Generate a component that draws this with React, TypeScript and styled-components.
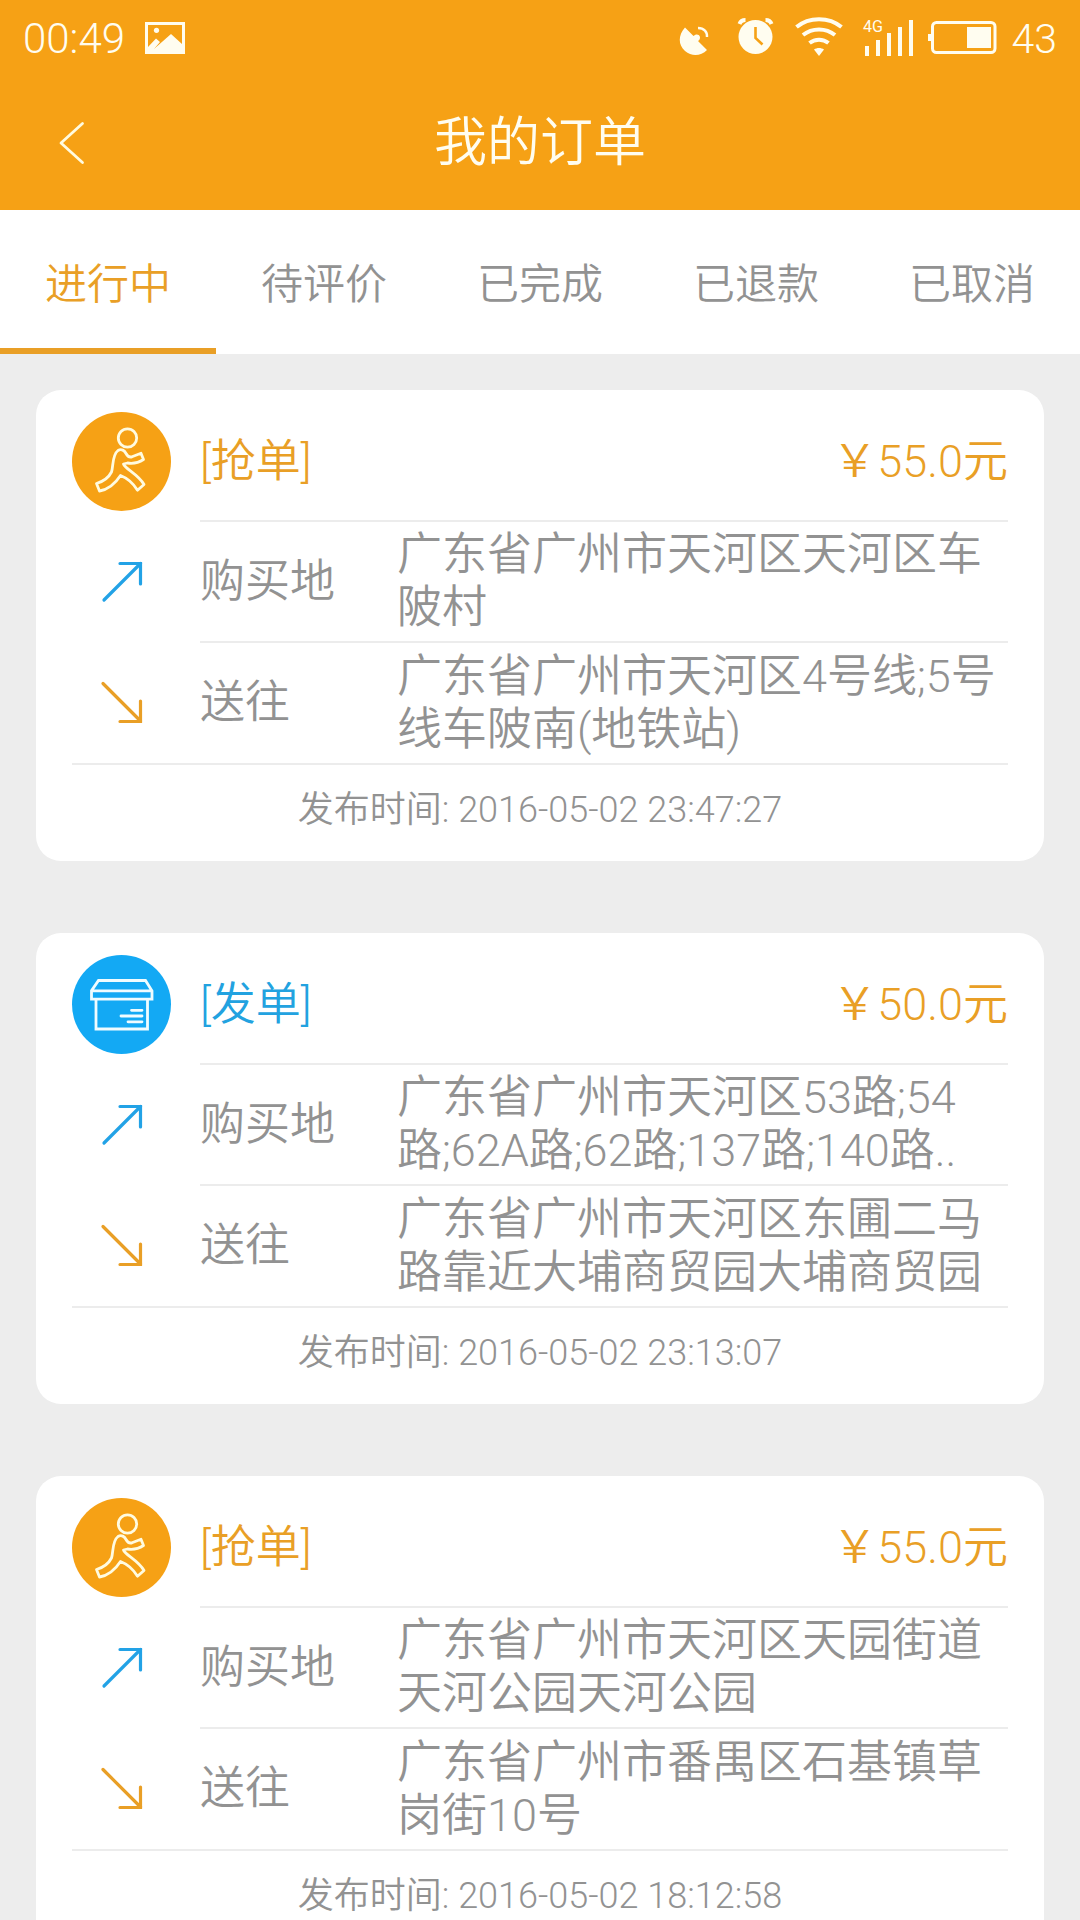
import React from "react";
import styled, { createGlobalStyle } from "styled-components";

const ORANGE = "#f6a115";
const AMBER = "#e99f26";
const BLUE = "#13a9f4";
const GREY = "#929292";
const LINE = "#ececec";

const GlobalStyle = createGlobalStyle`
  * { box-sizing: border-box; }
  html, body { margin: 0; padding: 0; }
  body {
    background: #ededed;
    font-family: Roboto, "Noto Sans CJK SC", sans-serif;
    font-weight: 350;
  }
`;

const Screen = styled.div`
  width: 1080px;
  height: 1920px;
  overflow: hidden;
  background: #ededed;
  display: flex;
  flex-direction: column;
`;

const Header = styled.header`
  flex: none;
  height: 210px;
  background: ${ORANGE};
  color: #fffdf0;
`;

const StatusBar = styled.div`
  height: 76px;
  padding: 0 23px;
  display: flex;
  align-items: center;
  justify-content: space-between;
`;

const StatusGroup = styled.div`
  display: flex;
  align-items: center;
`;

const StatusText = styled.span<{ $size: number }>`
  padding-top: 1px;
  font-size: ${(p) => p.$size}px;
  line-height: 50px;
`;

const Glyph = styled.svg`
  display: block;
  overflow: visible;
`;

const PictureGlyph = styled(Glyph)`
  margin-left: 20px;
`;

const NavBar = styled.div`
  height: 134px;
  display: grid;
  grid-template-columns: 140px 1fr 140px;
  align-items: center;
`;

const Back = styled.button`
  height: 134px;
  padding: 0 0 0 59px;
  border: 0;
  background: none;
  display: flex;
  align-items: center;
`;

const Title = styled.h1`
  margin: 0;
  font-size: 53px;
  line-height: 64px;
  font-weight: 350;
  text-align: center;
`;

const Tabs = styled.nav`
  flex: none;
  height: 144px;
  background: #fff;
  display: grid;
  grid-template-columns: repeat(5, 1fr);
`;

const Tab = styled.div<{ $active?: boolean }>`
  display: flex;
  align-items: center;
  justify-content: center;
  padding-top: 11px;
  font-size: 42px;
  line-height: 50px;
  color: ${(p) => (p.$active ? AMBER : GREY)};
  border-bottom: 6px solid ${(p) => (p.$active ? AMBER : "transparent")};
`;

const List = styled.main`
  padding: 36px;
  display: flex;
  flex-direction: column;
  gap: 72px;
`;

const Card = styled.article`
  flex: none;
  height: 471px;
  padding: 0 36px;
  border-radius: 25px;
  background: #fff;
  display: grid;
  grid-template-columns: 128px 1fr;
  grid-template-rows: 132px 121px 122px 96px;
`;

const BadgeCell = styled.div`
  padding-top: 22px;
`;

const ArrowCell = styled.div<{ $line?: boolean }>`
  display: flex;
  align-items: center;
  padding: 0 0 ${(p) => (p.$line ? 0 : 4)}px 30px;
  border-bottom: ${(p) => (p.$line ? `2px solid ${LINE}` : "0")};
`;

const Row = styled.div`
  display: flex;
  align-items: center;
  border-bottom: 2px solid ${LINE};
  color: ${GREY};
  font-size: 45px;
  line-height: 52.7px;
`;

const HeadRow = styled(Row)`
  justify-content: space-between;
  padding-top: 15px;
`;

const Kind = styled.span<{ $color: string }>`
  color: ${(p) => p.$color};
`;

const Price = styled.span`
  color: ${AMBER};
`;

const Label = styled.span`
  flex: none;
  width: 197px;
  padding-top: 1px;
`;

const Address = styled.span<{ $offset?: number }>`
  padding-top: ${(p) => p.$offset ?? 0}px;
  white-space: pre;
`;

const Time = styled.div`
  grid-column: 1 / -1;
  display: flex;
  align-items: center;
  justify-content: center;
  padding-bottom: 6px;
  font-size: 36px;
  line-height: 42px;
  color: ${GREY};
`;

const Badge = styled.svg`
  display: block;
`;

const RunnerBadge = () => (
  <Badge width="99" height="99" viewBox="0 0 99 99" fill="none" stroke="#fffbe0" strokeWidth="2.8" strokeLinejoin="round">
    <circle cx="49.5" cy="49.5" r="49.5" fill={ORANGE} stroke="none" />
    <circle cx="55.5" cy="26" r="9.2" />
    <path d="M46 38.5 C49.500 36.500 52.500 38.500 54 41.500 C55.500 44.500 57 45.500 60 44.800 L69 41.300 L71.500 47.500 C67 50.500 62 52 55.500 51 L51.500 52 C53 57 66 62 72 72.500 L65.500 78.200 C61 71 55 66 48.500 63.500 C43 72 36 77.500 27.500 79 L24.500 71.500 C31 69.500 37 65 39.500 60 C41.500 54 40 43 46 38.500 Z" />
  </Badge>
);

const ParcelBadge = () => (
  <Badge width="99" height="99" viewBox="0 0 99 99" fill="none" stroke="#effcff" strokeWidth="2.8">
    <circle cx="49.5" cy="49.5" r="49.5" fill={BLUE} stroke="none" />
    <path d="M26.500 25.500 H73.500 L80 35.800 V44.200 H19.500 V35.800 Z M19.500 35.800 H80 M24 44.200 V74 H75.500 V44.200" />
    <path d="M59.500 55.300 H70 M49 61 H70 M56 66.800 H70" strokeLinecap="round" />
  </Badge>
);

const ArrowUp = () => (
  <Glyph width="42" height="42" viewBox="0 0 42 42" fill="none" stroke="#22a2e6" strokeWidth="3.2" strokeLinecap="round">
    <path d="M2 40 L38.500 3.500" />
    <path d="M18 3.500 H38.500 V24" />
  </Glyph>
);

const ArrowDown = () => (
  <Glyph width="42" height="42" viewBox="0 0 42 42" fill="none" stroke={AMBER} strokeWidth="3.2" strokeLinecap="round">
    <path d="M1 1.500 L38.500 39" />
    <path d="M18 39.500 H38.500 V19" />
  </Glyph>
);

const PictureIcon = () => (
  <PictureGlyph width="40" height="32" viewBox="0 0 40 32" fill="#fffdf0">
    <path fillRule="evenodd" d="M0 0 H40 V32 H0 Z M3 3 V25 L11 16.500 L15 20 L9 27 L26 12 L37 22 V3 Z" />
    <circle cx="11.500" cy="8.300" r="2.600" />
  </PictureGlyph>
);

const StatusIcons = () => (
  <Glyph width="332" height="76" viewBox="0 0 332 76" fill="none" stroke="#fffdf0">
    {/* satellite dish */}
    <path fill="#fffdf0" stroke="none" d="M5 27.500 L13.500 36 C15.500 33.500 20 34 20 37.500 C20 39.500 19 40.500 18 41 L27 50 C21 56 12 57 5 51 C-2 45 -2 35 5 27.500 Z" />
    <path strokeWidth="2.400" d="M18 28 C24 28 27.500 32 27 37" />
    {/* alarm clock */}
    <circle cx="75.500" cy="37" r="17" fill="#fffdf0" stroke="none" />
    <path strokeWidth="4" d="M59.500 24 C60.500 21 62.500 20 65.500 20 M91.500 24 C90.500 21 88.500 20 85.500 20" />
    <path stroke={ORANGE} strokeWidth="2.600" d="M75.500 27 V38 L82.500 44.500" />
    {/* wifi */}
    <path strokeWidth="4" d="M116.500 27 C129 16.500 149 16.500 161.500 27 M123 35 C132 27.500 146 27.500 155 35 M129.500 43 C135 38.500 143 38.500 148.500 43" />
    <path fill="#fffdf0" stroke="none" d="M134 49.500 C137 47.500 141 47.500 144 49.500 L139 56 Z" />
    {/* signal bars */}
    <path strokeWidth="4" d="M187 46 V56 M198 40 V56 M209 33 V56 M220 27 V56 M231 20 V56" />
    <text x="183" y="32" fill="#fffdf0" stroke="none" fontSize="16" fontWeight="400" textLength="20" lengthAdjust="spacingAndGlyphs" fontFamily="Roboto, sans-serif">4G</text>
    {/* battery */}
    <rect x="252.500" y="22.500" width="62.500" height="30" rx="4" strokeWidth="3" />
    <path strokeWidth="3" d="M249.500 34 V41" />
    <rect x="287" y="27" width="24" height="21" fill="#fffdf0" stroke="none" />
  </Glyph>
);

type OrderKind = "grab" | "send";
type Order = { kind: OrderKind; price: string; from: string; to: string; time: string };

const kinds: Record<OrderKind, { label: string; color: string; badge: React.ReactNode }> = {
  grab: { label: "[抢单]", color: AMBER, badge: <RunnerBadge /> },
  send: { label: "[发单]", color: "#22a2e0", badge: <ParcelBadge /> },
};

const orders: Order[] = [
  {
    kind: "grab",
    price: "55.0",
    from: "广东省广州市天河区天河区车\n陂村",
    to: "广东省广州市天河区4号线;5号\n线车陂南(地铁站)",
    time: "2016-05-02 23:47:27",
  },
  {
    kind: "send",
    price: "50.0",
    from: "广东省广州市天河区53路;54\n路;62A路;62路;137路;140路..",
    to: "广东省广州市天河区东圃二马\n路靠近大埔商贸园大埔商贸园",
    time: "2016-05-02 23:13:07",
  },
  {
    kind: "grab",
    price: "55.0",
    from: "广东省广州市天河区天园街道\n天河公园天河公园",
    to: "广东省广州市番禺区石基镇草\n岗街10号",
    time: "2016-05-02 18:12:58",
  },
];

const OrderCard = ({ order }: { order: Order }) => {
  const kind = kinds[order.kind];
  return (
    <Card>
      <BadgeCell>{kind.badge}</BadgeCell>
      <HeadRow>
        <Kind $color={kind.color}>{kind.label}</Kind>
        <Price>￥{order.price}元</Price>
      </HeadRow>
      <ArrowCell>
        <ArrowUp />
      </ArrowCell>
      <Row>
        <Label>购买地</Label>
        <Address $offset={1}>{order.from}</Address>
      </Row>
      <ArrowCell $line>
        <ArrowDown />
      </ArrowCell>
      <Row>
        <Label>送往</Label>
        <Address $offset={2}>{order.to}</Address>
      </Row>
      <Time>发布时间: {order.time}</Time>
    </Card>
  );
};

const tabs = ["进行中", "待评价", "已完成", "已退款", "已取消"];

export default function App() {
  return (
    <>
      <GlobalStyle />
      <Screen>
        <Header>
          <StatusBar>
            <StatusGroup>
              <StatusText $size={42}>00:49</StatusText>
              <PictureIcon />
            </StatusGroup>
            <StatusGroup>
              <StatusIcons />
              <StatusText $size={41}>43</StatusText>
            </StatusGroup>
          </StatusBar>
          <NavBar>
            <Back aria-label="返回">
              <Glyph width="26" height="42" viewBox="0 0 26 42" fill="none" stroke="#fffbe0" strokeWidth="2.800" strokeLinecap="round" strokeLinejoin="round">
                <path d="M23.500 1.500 L2 21 L23.500 40.500" />
              </Glyph>
            </Back>
            <Title>我的订单</Title>
          </NavBar>
        </Header>
        <Tabs>
          {tabs.map((name, i) => (
            <Tab key={name} $active={i === 0}>
              {name}
            </Tab>
          ))}
        </Tabs>
        <List>
          {orders.map((o) => (
            <OrderCard key={o.time} order={o} />
          ))}
        </List>
      </Screen>
    </>
  );
}
